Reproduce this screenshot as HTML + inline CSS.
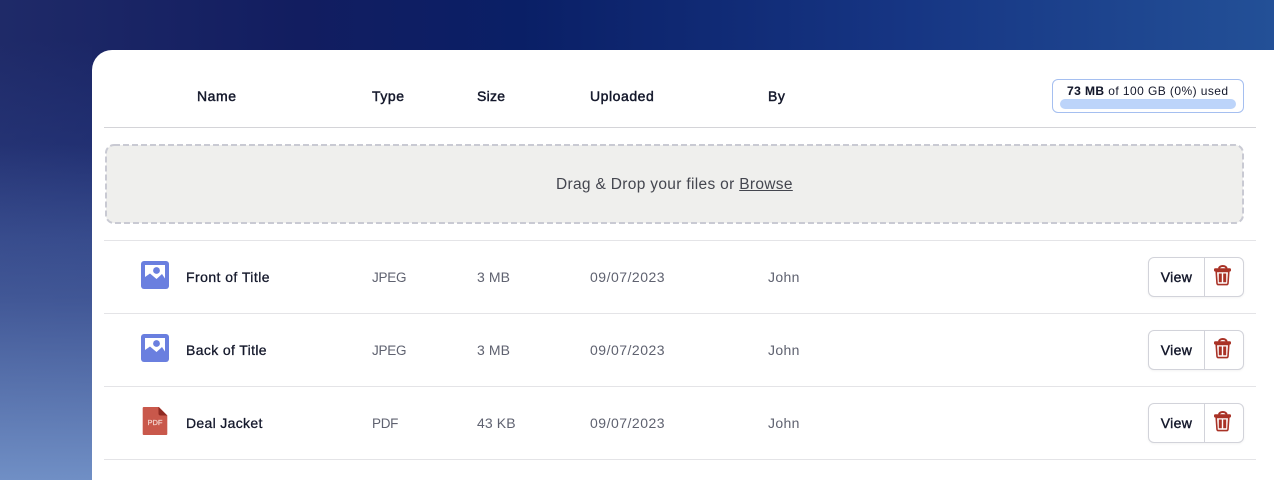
<!DOCTYPE html>
<html lang="en">
<head>
<meta charset="utf-8">
<title>Files</title>
<style>
*{box-sizing:border-box;margin:0;padding:0}
html,body{width:1274px;height:480px;overflow:hidden}
body{position:relative;font-family:"Liberation Sans",sans-serif;background:
 linear-gradient(to bottom,rgba(112,143,197,0) 30%,rgba(112,143,197,.35) 62%,rgba(112,143,197,1) 100%) 0 0/92px 480px no-repeat,
 linear-gradient(to bottom,rgba(45,65,135,0) 40px,rgba(45,65,135,.7) 50%,rgba(45,65,135,.6) 100%) 0 0/92px 480px no-repeat,
 linear-gradient(90deg,#1f2a68 0,#121d60 300px,#0a1f66 520px,#163583 900px,#235097 1274px)}
.card{position:absolute;left:92px;top:50px;width:1182px;height:430px;background:#fff;border-radius:20px 0 0 0}
.t{position:absolute;white-space:nowrap;font-size:14px;line-height:18px}
.h{color:#14182b;-webkit-text-stroke:.45px #14182b;letter-spacing:.55px}
.n{color:#14182b;-webkit-text-stroke:.3px #14182b;letter-spacing:.44px}
.c{color:#5f6270;letter-spacing:.36px}
.k{font-size:13.5px;letter-spacing:-.25px;margin-top:1px}
.line{position:absolute;left:104px;width:1152px;height:1px;background:#e4e4e7}
.btn{position:absolute;left:1148px;width:96px;height:40px;background:#fff;border:1px solid #d2d3da;border-radius:6px;box-shadow:0 1px 2px rgba(0,0,0,.05)}
.btn i{position:absolute;left:55px;top:0;width:1px;height:38px;background:#d2d3da}
.btn span{position:absolute;left:0;top:10px;width:55px;text-align:center;font-size:14px;line-height:18px;color:#14182b;-webkit-text-stroke:.4px #14182b;letter-spacing:.35px}
.btn svg{position:absolute;left:64px;top:7px}
.ic{position:absolute;left:141px}
</style>
</head>
<body>
<div class="card"></div>

<div class="t h" style="left:197px;top:87px">Name</div>
<div class="t h" style="left:372px;top:87px">Type</div>
<div class="t h" style="left:477px;top:87px;letter-spacing:.25px">Size</div>
<div class="t h" style="left:590px;top:87px">Uploaded</div>
<div class="t h" style="left:768px;top:87px">By</div>

<div style="position:absolute;left:1052px;top:79px;width:192px;height:34px;border:1px solid #a5bff0;border-radius:6px"></div>
<div class="t" style="left:1067px;top:82px;font-size:12px;line-height:18px;color:#14182b;letter-spacing:.43px"><b style="-webkit-text-stroke:.1px #14182b">73 MB</b> of 100 GB (0%) used</div>
<div style="position:absolute;left:1060px;top:99px;width:176px;height:10px;border-radius:5px;background:#bcd4fa"></div>

<div class="line" style="top:127px;background:#d4d4d8"></div>

<svg style="position:absolute;left:105px;top:144px" width="1139" height="80" viewBox="0 0 1139 80"><rect x="1" y="1" width="1137" height="78" rx="8" fill="#efefed" stroke="#c9cad3" stroke-width="2" stroke-dasharray="6 3"/></svg>
<div class="t" style="left:556px;top:175.500px;font-size:15.500px;color:#44464f;letter-spacing:.32px">Drag &amp; Drop your files or <span style="text-decoration:underline">Browse</span></div>

<div class="line" style="top:240px"></div>
<div class="line" style="top:313px"></div>
<div class="line" style="top:386px"></div>
<div class="line" style="top:459px"></div>

<!-- row 1 -->
<svg class="ic" style="top:261px" width="28" height="28" viewBox="0 0 28 28"><rect width="28" height="28" rx="3" fill="#6a7fdf"/><path d="M4 4H24V17.500L21 13L15.500 18L9 12.500L4 16Z" fill="#fff"/><circle cx="15.500" cy="9.500" r="3.400" fill="#6a7fdf"/></svg>
<div class="t n" style="left:186px;top:268px">Front of Title</div>
<div class="t c k" style="left:372px;top:268px">JPEG</div>
<div class="t c" style="left:477px;top:268px;letter-spacing:.1px">3 MB</div>
<div class="t c" style="left:590px;top:268px;letter-spacing:.5px">09/07/2023</div>
<div class="t c" style="left:768px;top:268px">John</div>
<div class="btn" style="top:257px"><span>View</span><i></i>
<svg width="20" height="22" viewBox="0 0 20 22"><path d="M6 3.500C6.500 1.500 8 1 9.800 1s3.300.5 3.800 2.500" fill="none" stroke="#a93226" stroke-width="2"/><rect x="1" y="3.200" width="17" height="3.400" rx="1.200" fill="#a93226"/><path d="M3.200 6.500H15.800L15 18.200Q14.800 19.600 13.300 19.600H5.700Q4.200 19.600 4 18.200Z" fill="#fff" stroke="#a93226" stroke-width="1.600"/><path d="M7.300 8.500V17.300M11.700 8.500V17.300" stroke="#a93226" stroke-width="3"/></svg></div>

<!-- row 2 -->
<svg class="ic" style="top:334px" width="28" height="28" viewBox="0 0 28 28"><rect width="28" height="28" rx="3" fill="#6a7fdf"/><path d="M4 4H24V17.500L21 13L15.500 18L9 12.500L4 16Z" fill="#fff"/><circle cx="15.500" cy="9.500" r="3.400" fill="#6a7fdf"/></svg>
<div class="t n" style="left:186px;top:341px;letter-spacing:.36px">Back of Title</div>
<div class="t c k" style="left:372px;top:341px">JPEG</div>
<div class="t c" style="left:477px;top:341px;letter-spacing:.1px">3 MB</div>
<div class="t c" style="left:590px;top:341px;letter-spacing:.5px">09/07/2023</div>
<div class="t c" style="left:768px;top:341px">John</div>
<div class="btn" style="top:330px"><span>View</span><i></i>
<svg width="20" height="22" viewBox="0 0 20 22"><path d="M6 3.500C6.500 1.500 8 1 9.800 1s3.300.5 3.800 2.500" fill="none" stroke="#a93226" stroke-width="2"/><rect x="1" y="3.200" width="17" height="3.400" rx="1.200" fill="#a93226"/><path d="M3.200 6.500H15.800L15 18.200Q14.800 19.600 13.300 19.600H5.700Q4.200 19.600 4 18.200Z" fill="#fff" stroke="#a93226" stroke-width="1.600"/><path d="M7.300 8.500V17.300M11.700 8.500V17.300" stroke="#a93226" stroke-width="3"/></svg></div>

<!-- row 3 -->
<svg class="ic" style="top:407px" width="28" height="28" viewBox="0 0 28 28"><path d="M1.700 1Q1.700 0 2.700 0H18L26.300 8.500V27Q26.300 28 25.300 28H2.700Q1.700 28 1.700 27Z" fill="#c9584b"/><path d="M17.500 0L26.300 8.500H19.500Q17.500 8.500 17.500 6.500Z" fill="#8f2a22"/><text x="14" y="18" text-anchor="middle" font-family="Liberation Sans" font-size="7.500" fill="#f4d6d0" stroke="#f4d6d0" stroke-width=".2">PDF</text></svg>
<div class="t n" style="left:186px;top:414px;letter-spacing:.32px">Deal Jacket</div>
<div class="t c k" style="left:372px;top:414px;letter-spacing:-.3px">PDF</div>
<div class="t c" style="left:477px;top:414px;letter-spacing:.1px">43 KB</div>
<div class="t c" style="left:590px;top:414px;letter-spacing:.5px">09/07/2023</div>
<div class="t c" style="left:768px;top:414px">John</div>
<div class="btn" style="top:403px"><span>View</span><i></i>
<svg width="20" height="22" viewBox="0 0 20 22"><path d="M6 3.500C6.500 1.500 8 1 9.800 1s3.300.5 3.800 2.500" fill="none" stroke="#a93226" stroke-width="2"/><rect x="1" y="3.200" width="17" height="3.400" rx="1.200" fill="#a93226"/><path d="M3.200 6.500H15.800L15 18.200Q14.800 19.600 13.300 19.600H5.700Q4.200 19.600 4 18.200Z" fill="#fff" stroke="#a93226" stroke-width="1.600"/><path d="M7.300 8.500V17.300M11.700 8.500V17.300" stroke="#a93226" stroke-width="3"/></svg></div>
</body>
</html>
